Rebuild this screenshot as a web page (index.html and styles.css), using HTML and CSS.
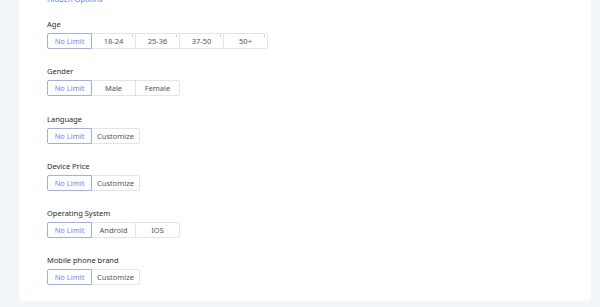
FILE: index.html
```html
<!DOCTYPE html>
<html>
<head>
    <link rel="stylesheet" href="styles.css">
</head>
<body>
    <div class="page">
        <div class="card">
            <a class="toggle-link" href="#">Hidden Options</a>

            <div class="field">
                <div class="field-label">Age</div>
                <div class="segments">
                    <span class="seg active">No Limit</span>
                    <span class="seg mark">18-24</span>
                    <span class="seg mark">25-36</span>
                    <span class="seg mark">37-50</span>
                    <span class="seg mark">50+</span>
                </div>
            </div>

            <div class="field">
                <div class="field-label">Gender</div>
                <div class="segments">
                    <span class="seg active">No Limit</span>
                    <span class="seg">Male</span>
                    <span class="seg">Female</span>
                </div>
            </div>

            <div class="field">
                <div class="field-label">Language</div>
                <div class="segments">
                    <span class="seg active">No Limit</span>
                    <span class="seg wide">Customize</span>
                </div>
            </div>

            <div class="field">
                <div class="field-label">Device Price</div>
                <div class="segments">
                    <span class="seg active">No Limit</span>
                    <span class="seg wide">Customize</span>
                </div>
            </div>

            <div class="field">
                <div class="field-label">Operating System</div>
                <div class="segments">
                    <span class="seg active">No Limit</span>
                    <span class="seg">Android</span>
                    <span class="seg">IOS</span>
                </div>
            </div>

            <div class="field">
                <div class="field-label">Mobile phone brand</div>
                <div class="segments">
                    <span class="seg active">No Limit</span>
                    <span class="seg wide">Customize</span>
                </div>
            </div>
        </div>
    </div>
</body>
</html>
```

FILE: styles.css
```css
html,
body {
    margin: 0;
    background: #f2f5f9;
    font-family: "Noto Sans", Arial, sans-serif;
}

.page {
    padding: 0 9px 6px 19px;
}

.card {
    margin-top: -19px;
    padding: 13px 0 16px 28px;
    background: #fff;
    border-radius: 4px;
}

.toggle-link {
    display: block;
    height: 10px;
    line-height: 10px;
    font-size: 7.5px;
    color: #5b7cf2;
    text-decoration: none;
}

.field {
    margin-top: 15px;
}

.field + .field {
    margin-top: 17.3px;
}

.field-label {
    height: 10px;
    line-height: 10px;
    font-size: 7.5px;
    color: #2a2a2a;
    margin-bottom: 4px;
}

.segments {
    display: flex;
}

.seg {
    position: relative;
    box-sizing: border-box;
    width: 45px;
    height: 16px;
    line-height: 14px;
    border: 1px solid #e1e4e9;
    font-size: 7.5px;
    color: #555;
    text-align: center;
    background: #fff;
}

.seg + .seg {
    margin-left: -1px;
}

.seg:first-child {
    border-radius: 2px 0 0 2px;
}

.seg:last-child {
    border-radius: 0 2px 2px 0;
}

.seg.wide {
    width: 49px;
}

.seg.active {
    z-index: 1;
    border-color: #9daef6;
    color: #6a85f0;
}

/* small corner tick on the age options */
.seg.mark::after {
    content: "";
    position: absolute;
    top: 1px;
    right: 2px;
    width: 1px;
    height: 2px;
    background: #c4c8cf;
}
```
